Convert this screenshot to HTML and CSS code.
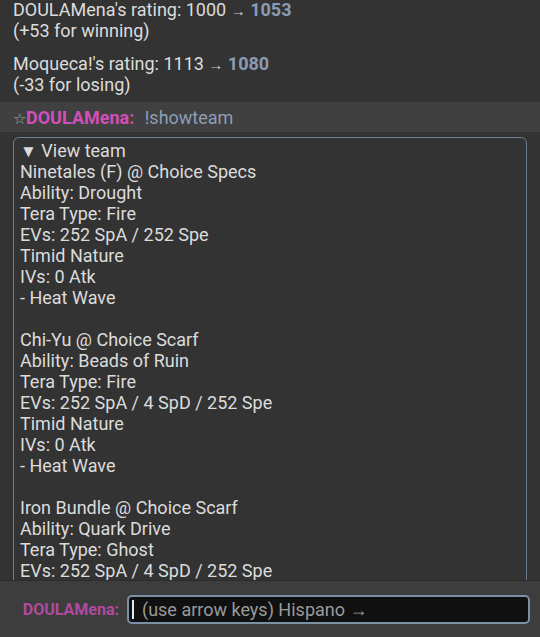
FILE: index.html
```html
<!DOCTYPE html>
<html lang="en">
<head>
    <meta charset="UTF-8">
    <meta name="viewport" content="width=device-width, initial-scale=1.0">
    <title>Battle chat</title>
    <link rel="stylesheet" href="styles.css">
</head>
<body>
    <div class="room">
        <div class="log">
            <p class="notice">DOULAMena's rating: 1000 <span class="arrow">&rarr;</span> <strong>1053</strong><br>(+53 for winning)</p>
            <p class="notice">Moqueca!'s rating: 1113 <span class="arrow">&rarr;</span> <strong>1080</strong><br>(-33 for losing)</p>
            <div class="chat mine">
                <span class="rank">&#9734;</span><strong class="user">DOULAMena:</strong> <em class="msg">!showteam</em>
            </div>
            <div class="team">
                <div class="summary"><span class="tri">&#9660;</span> View team</div>
                <div class="set">
                    Ninetales (F) @ Choice Specs<br>
                    Ability: Drought<br>
                    Tera Type: Fire<br>
                    EVs: 252 SpA / 252 Spe<br>
                    Timid Nature<br>
                    IVs: 0 Atk<br>
                    - Heat Wave
                </div>
                <div class="set">
                    Chi-Yu @ Choice Scarf<br>
                    Ability: Beads of Ruin<br>
                    Tera Type: Fire<br>
                    EVs: 252 SpA / 4 SpD / 252 Spe<br>
                    Timid Nature<br>
                    IVs: 0 Atk<br>
                    - Heat Wave
                </div>
                <div class="set">
                    Iron Bundle @ Choice Scarf<br>
                    Ability: Quark Drive<br>
                    Tera Type: Ghost<br>
                    EVs: 252 SpA / 4 SpD / 252 Spe<br>
                    Timid Nature<br>
                    IVs: 0 Atk<br>
                    - Heat Wave
                </div>
            </div>
        </div>
        <div class="composer">
            <label class="me" for="chatbox">DOULAMena:</label>
            <div class="textbox">
                <span class="caret"></span>
                <input id="chatbox" type="text" placeholder="(use arrow keys) Hispano &rarr;">
            </div>
        </div>
    </div>
</body>
</html>
```

FILE: styles.css
```css
html, body {
    margin: 0;
    height: 100%;
}
body {
    font-family: Roboto, 'Noto Sans', sans-serif;
    font-size: 18px;
    line-height: 21px;
    color: #dcdcdc;
    background-color: #333333;
}
.room {
    display: flex;
    flex-direction: column;
    height: 100vh;
}
.log {
    flex: 1;
    overflow: hidden;
}
.notice {
    margin: 0 0 12px;
    padding: 0 13px;
}
.notice:first-child {
    margin-top: -1px;
}
.notice:nth-child(2) {
    margin-bottom: 7px;
}
.notice strong {
    color: #8a9bb6;
}
.arrow {
    font-size: 15px;
    line-height: 1;
    color: #cfcfcf;
}
.chat {
    padding: 5px 13px 4px;
}
.mine {
    background-color: #404040;
}
.rank {
    font-size: 15px;
    line-height: 1;
    color: #a8a8a8;
}
.user {
    color: #d14fb7;
    margin-right: 6px;
}
.msg {
    font-style: normal;
    color: #8d9db6;
}
.team {
    margin: 5px 13px 0;
    padding: 2px 6px 6px;
    border: 1px solid #6d7d92;
    border-radius: 6px;
}
.tri {
    font-size: 17px;
    line-height: 1;
}
.set + .set {
    margin-top: 21px;
}
.composer {
    display: flex;
    align-items: center;
    height: 56px;
    border-top: 1px solid #2c2c2c;
    background-color: #3d3d3d;
}
.me {
    width: 119px;
    text-align: right;
    font-size: 16px;
    font-weight: bold;
    color: #b04aa0;
    margin-right: 8px;
}
.textbox {
    display: flex;
    align-items: center;
    width: 399px;
    height: 25px;
    border: 2px solid #7b8fa6;
    border-radius: 5px;
    background-color: #101010;
}
.caret {
    width: 2px;
    height: 19px;
    margin-left: 3px;
    background-color: #e8e8e8;
}
.textbox input {
    flex: 1;
    min-width: 0;
    border: none;
    outline: none;
    background: transparent;
    padding: 0 0 0 8px;
    font-family: Roboto, 'Noto Sans', sans-serif;
    font-size: 18px;
    color: #dcdcdc;
}
.textbox input::placeholder {
    color: #9a9a9a;
}
```
